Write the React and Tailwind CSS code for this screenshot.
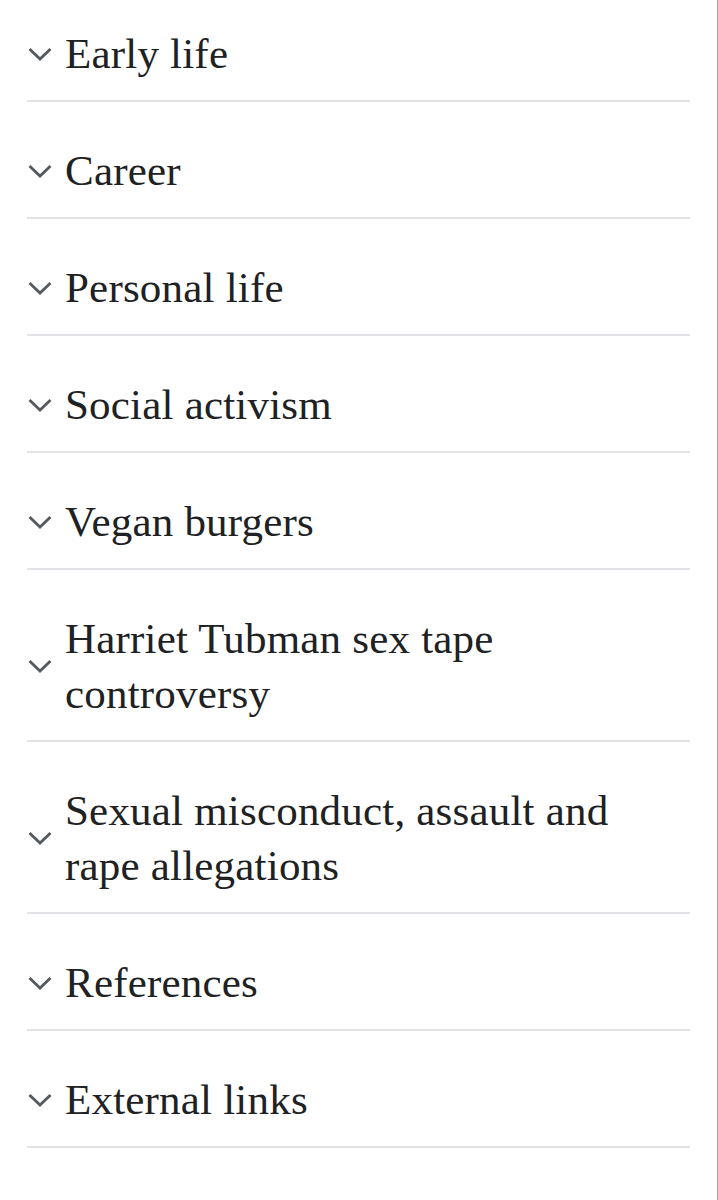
const sections = [
  "Early life",
  "Career",
  "Personal life",
  "Social activism",
  "Vegan burgers",
  "Harriet Tubman sex tape controversy",
  "Sexual misconduct, assault and rape allegations",
  "References",
  "External links",
];

function Chevron() {
  return (
    <svg width="26" height="16" viewBox="0 0 26 16" className="shrink-0">
      <polyline
        points="2.5,3 13,13 23.5,3"
        fill="none"
        stroke="#54595d"
        strokeWidth="2.8"
        strokeLinejoin="miter"
      />
    </svg>
  );
}

export default function App() {
  return (
    <div className="min-h-[1200px] w-[718px] bg-white border-r border-[#a2a2a2] font-['Liberation_Serif',Georgia,serif] text-[#202122]">
      <div className="px-[27px]">
        {sections.map((title, i) => (
          <div
            key={title}
            className={`flex items-center border-b-2 border-[#e1e3e7] pb-[19px] ${
              i === 0 ? "pt-[26px]" : "pt-[41px]"
            }`}
          >
            <Chevron />
            <h2 className="ml-[12px] text-[43px] leading-[55px] font-normal tracking-[0.2px] pr-[30px]">
              {title}
            </h2>
          </div>
        ))}
      </div>
    </div>
  );
}
